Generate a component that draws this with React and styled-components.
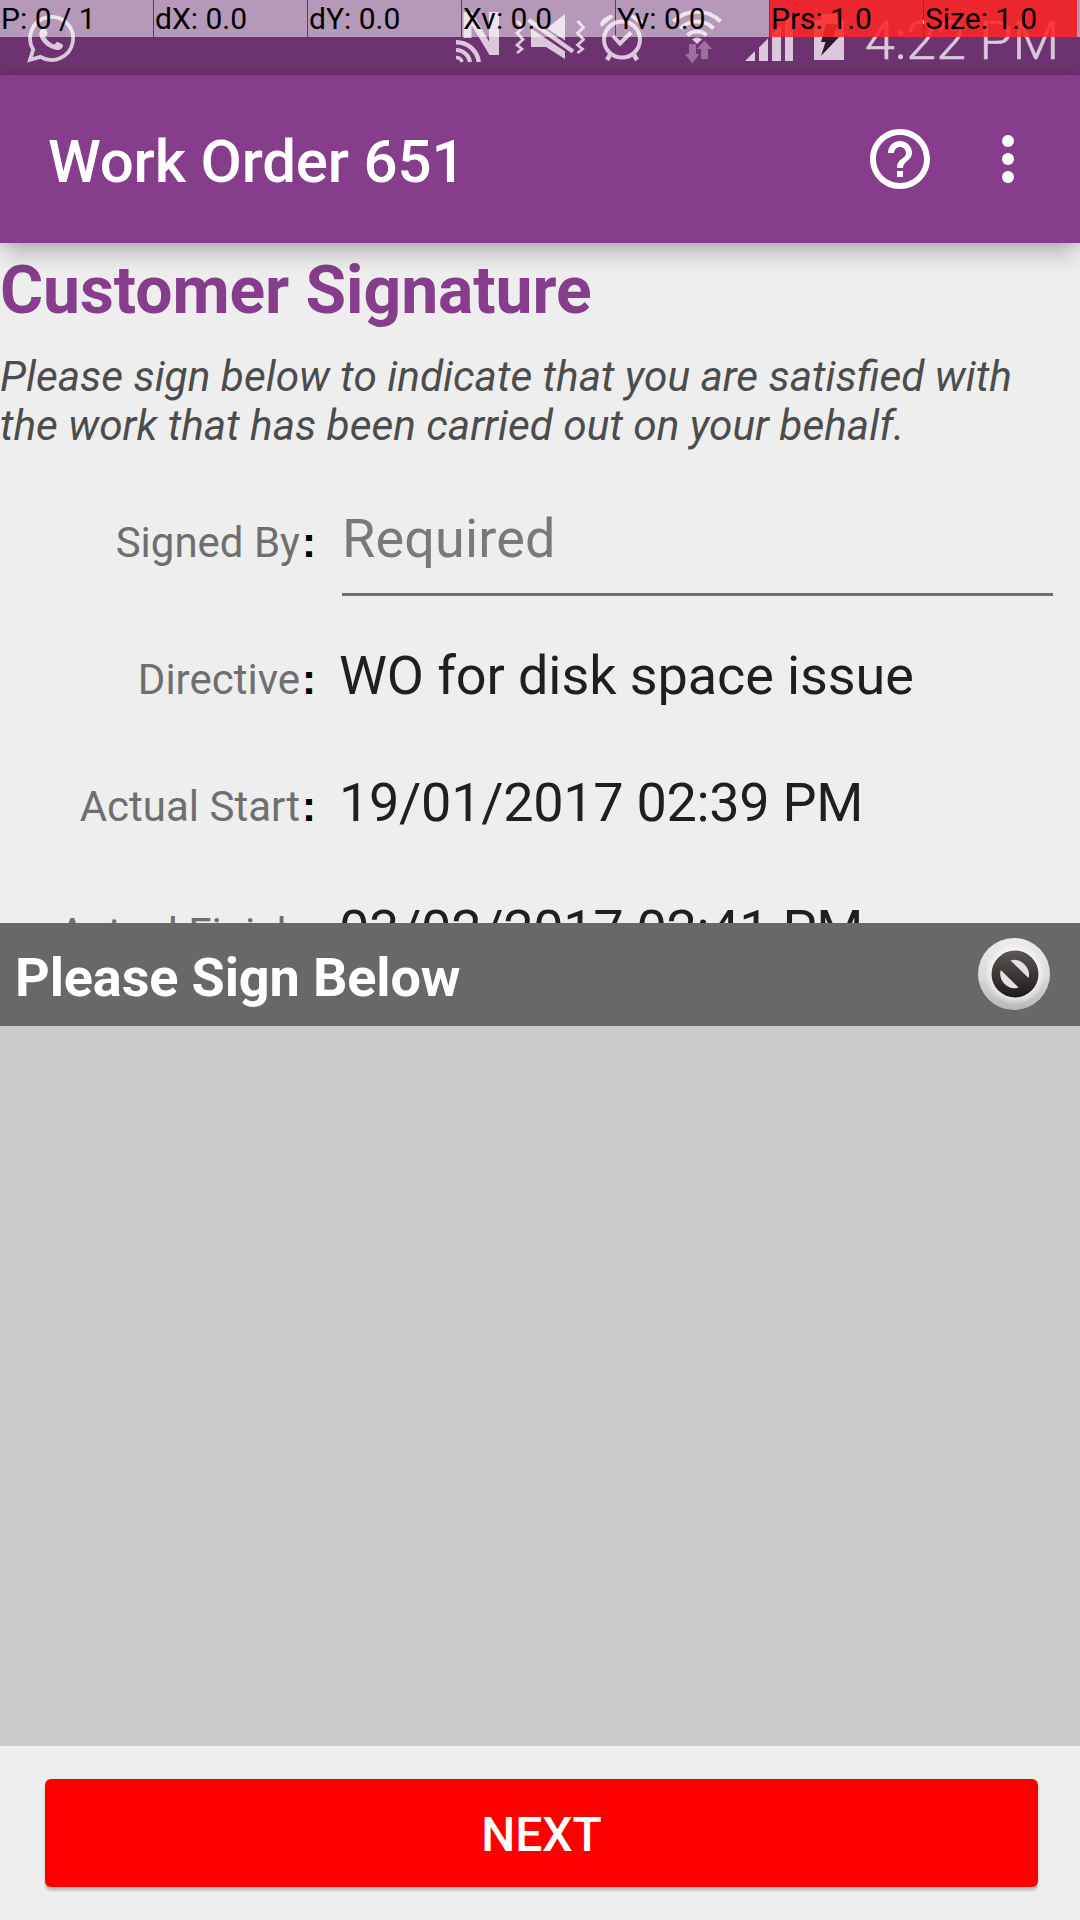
import React from "react";
import styled, { createGlobalStyle } from "styled-components";

const Global = createGlobalStyle`
  *, *::before, *::after { box-sizing: border-box; }
  html, body { margin: 0; padding: 0; background: #eeeeee; }
  body { font-family: Roboto, "Noto Sans", sans-serif; }
`;

const ICON = "#dbc8dc";
const PURPLE = "#863d8b";

const Screen = styled.div`
  position: relative;
  width: 1080px;
  height: 1920px;
  display: flex;
  flex-direction: column;
  overflow: hidden;
  background: #eeeeee;
`;

const StatusBar = styled.div`
  flex: none;
  height: 75px;
  display: flex;
  align-items: flex-start;
  padding-left: 27px;
  background: #6d3270;
`;

const StatusIcon = styled.svg`
  flex: none;
  display: block;
  width: ${(p) => p.$w}px;
  height: 75px;
  margin-right: ${(p) => p.$gap}px;
`;

const Clock = styled.div`
  font-size: 54px;
  font-weight: 300;
  line-height: 63px;
  padding-top: 9px;
  color: ${ICON};
  -webkit-text-stroke: 0.5px ${ICON};
  white-space: nowrap;
`;

const PointerBar = styled.div`
  position: absolute;
  top: 0;
  left: 0;
  width: 1080px;
  height: 37px;
  display: flex;
  gap: 1px;
`;

const PointerCell = styled.div`
  flex: none;
  width: 153px;
  height: 37px;
  padding: 0 0 0 1px;
  font-size: 30px;
  line-height: 37px;
  white-space: pre;
  color: #000;
  background: ${(p) =>
    p.$hot
      ? "linear-gradient(rgba(255,0,0,.75), rgba(255,0,0,.75)), rgba(255,255,255,.5)"
      : "rgba(255,255,255,.5)"};
`;

const PointerRest = styled.div`
  flex: 1;
  margin-left: -1px;
  background: rgba(255, 255, 255, 0.5);
`;

const AppBar = styled.header`
  flex: none;
  z-index: 1;
  height: 168px;
  display: flex;
  align-items: center;
  padding: 0 66px 0 48px;
  background: ${PURPLE};
  box-shadow: 0 14px 22px -4px rgba(0, 0, 0, 0.24), 0 0 10px rgba(0, 0, 0, 0.1);
`;

const Title = styled.h1`
  flex: 1;
  margin: 0;
  padding-top: 6px;
  font-size: 60px;
  font-weight: 500;
  line-height: 70px;
  letter-spacing: -0.17px;
  color: #fff;
`;

const HelpIcon = styled.svg`
  display: block;
  width: 60px;
  height: 60px;
  margin-right: 72px;
`;

const MoreIcon = styled.svg`
  display: block;
  width: 12px;
  height: 48px;
`;

const Content = styled.main`
  flex: none;
  height: 680px;
  overflow: hidden;
  padding-top: 9px;
`;

const Heading = styled.h2`
  margin: 0;
  font-size: 66px;
  font-weight: 700;
  line-height: 77px;
  letter-spacing: -0.07px;
  color: ${PURPLE};
`;

const Note = styled.p`
  margin: 23px 0 57px;
  font-size: 42.36px;
  font-style: italic;
  line-height: 49px;
  color: #4c4c4c;
`;

const Row = styled.div`
  display: grid;
  grid-template-columns: 300px 39px 1fr;
  align-items: baseline;
  height: ${(p) => p.$h}px;
`;

const Label = styled.div`
  font-size: 42px;
  line-height: 49px;
  text-align: right;
  color: #6f6f6f;
`;

const Colon = styled.div`
  padding-left: 2px;
  font-family: "Liberation Sans", sans-serif;
  font-size: 42px;
  font-weight: 700;
  line-height: 49px;
  color: #000;
`;

const Value = styled.div`
  font-size: 54px;
  line-height: 63px;
  letter-spacing: ${(p) => p.$track}px;
  color: #1f1f1f;
  white-space: nowrap;
`;

const Field = styled.div`
  height: 89px;
  margin: 0 27px 0 3px;
  border-bottom: 3px solid #6d6f6d;
  font-size: 54px;
  line-height: 63px;
  letter-spacing: 0.14px;
  color: #797979;
`;

const SignBar = styled.div`
  flex: none;
  height: 103px;
  display: flex;
  align-items: center;
  justify-content: space-between;
  padding: 0 30px 0 15px;
  background: #686868;
`;

const SignTitle = styled.div`
  padding-top: 5px;
  font-size: 54px;
  font-weight: 700;
  line-height: 63px;
  letter-spacing: -0.13px;
  color: #fff;
`;

const ClearIcon = styled.svg`
  display: block;
  width: 72px;
  height: 72px;
  margin-bottom: 1px;
`;

const SignArea = styled.div`
  flex: none;
  height: 720px;
  background: #cbcbcb;
`;

const Footer = styled.footer`
  flex: 1;
  padding: 33px 42px 0 45px;
`;

const NextButton = styled.button`
  display: block;
  width: 100%;
  height: 108px;
  padding: 4px 0 0;
  border: 0;
  border-radius: 6px;
  background: #ff0000;
  color: #fff;
  font-family: inherit;
  font-size: 48px;
  font-weight: 500;
  line-height: 56px;
  text-align: center;
  box-shadow: 0 4px 2px rgba(0, 0, 0, 0.16), 0 1px 3px rgba(0, 0, 0, 0.12);
`;

const pointers = [
  { text: "P: 0 / 1" },
  { text: "dX: 0.0" },
  { text: "dY: 0.0" },
  { text: "Xv: 0.0" },
  { text: "Yv: 0.0" },
  { text: "Prs: 1.0", hot: true },
  { text: "Size: 1.0", hot: true },
];

const rows = [
  { label: "Directive", value: "WO for disk space issue", track: -0.1 },
  { label: "Actual Start", value: "19/01/2017 02:39 PM", track: -0.3 },
  { label: "Actual Finish", value: "03/02/2017 02:41 PM", track: -0.3 },
];

function StatusIcons() {
  return (
    <>
      <StatusIcon $w={49} $gap={380} viewBox="27 0 49 75">
        <path
          d="M33.2 49.5A21.5 21.5 0 1 1 40.5 56.8L30 59.8Z"
          fill="none"
          stroke={ICON}
          strokeWidth="3.8"
        />
        <path
          d="M41 29.5c2-2.5 4.5-2 5.3 0l1.3 3.4c.4 1.4-2.6 3.5-2.2 4.2 2 3.4 5 6 8.4 7.5 1 .4 2.6-3.2 4-2.7l4 2c1.6.8 1.400 2.600.2 4-3 3.500-7.500 2-11.500.2-5-2.400-8.400-6.300-10.300-10.400-1.400-3.200-1.200-6 .8-8.200Z"
          fill={ICON}
        />
      </StatusIcon>
      <StatusIcon $w={44} $gap={15} viewBox="456 0 44 75">
        <path d="M463.5 38V12h8.5l17 29.5V12h10v43h-9.5L471.5 25v13Z" fill={ICON} />
        <g fill="none" stroke={ICON} strokeWidth="4">
          <path d="M456 42.2A22.5 22.5 0 0 1 478.8 62" strokeWidth="4.5" />
          <path d="M456 50A14 14 0 0 1 470 62" />
          <path d="M456 57.5A6 6 0 0 1 462 62" strokeWidth="3.5" />
        </g>
      </StatusIcon>
      <StatusIcon $w={70} $gap={15} viewBox="515 0 70 75">
        <path d="M531 29h15l19-15v45l-19-12h-15Z" fill={ICON} />
        <path d="M528 21l46 31" stroke="#6d3270" strokeWidth="9" />
        <path d="M528.5 20l44.5 31.5" stroke={ICON} strokeWidth="4.5" />
        <g fill="none" stroke={ICON} strokeWidth="2.8">
          <path d="M517 21l6 6.5-6 5.5 6 6.5-6 5.5 5 4-5 4" />
          <path d="M577.5 21l6 6.5-6 5.5 6 6.5-6 5.5 5 4-5 4" />
        </g>
      </StatusIcon>
      <StatusIcon $w={44} $gap={28} viewBox="600 0 44 75">
        <g fill="none" stroke={ICON}>
          <circle cx="622" cy="39.5" r="18" strokeWidth="4" />
          <path d="M613 36l7 7.5 11-11" strokeWidth="4" />
          <path d="M610.5 54l-3.5 6M633.5 54l3.5 6" strokeWidth="4.5" />
        </g>
        <path d="M601.5 27c-3-4 0-7 3-9s7-5 9-1ZM642.5 27c3-4 0-7-3-9s-7-5-9-1Z" fill={ICON} />
      </StatusIcon>
      <StatusIcon $w={50} $gap={23} viewBox="672 0 50 75">
        <g fill="none" stroke={ICON} strokeWidth="4">
          <path d="M673.5 21.5A33 33 0 0 1 720.5 21.5" />
          <path d="M680.5 28.5A23 23 0 0 1 713.5 28.5" />
          <path d="M687.5 35.5A13.5 13.5 0 0 1 706.5 35.5" />
        </g>
        <path d="M692 39.5q5-4 10 0l-5 4.5Z" fill={ICON} />
        <path d="M689 44h7v10h3.5l-7.2 9.5L685 54h4ZM701 59V49h-4.5l8-8.5 7.5 8.5h-4v10Z" fill="#9a719d" />
      </StatusIcon>
      <StatusIcon $w={48} $gap={21} viewBox="745 0 48 75">
        <path d="M745 61L755 51V61ZM759 47.5L768 38.5V61H759ZM772 34L781 25V61H772ZM785 22L793 14V61H785Z" fill={ICON} />
      </StatusIcon>
      <StatusIcon $w={30} $gap={21} viewBox="814 0 30 75">
        <path d="M821 14h16v6h7v40h-30V20h7Z" fill={ICON} />
        <path d="M826 24h12l-5 13h6l-18 19 4.5-14H821Z" fill="#2b1a2d" />
      </StatusIcon>
    </>
  );
}

export default function App() {
  return (
    <Screen>
      <Global />
      <StatusBar>
        <StatusIcons />
        <Clock>4:22 PM</Clock>
      </StatusBar>
      <AppBar>
        <Title>Work Order 651</Title>
        <HelpIcon viewBox="2 2 20 20" fill="#fff">
          <path d="M11 18h2v-2h-2v2zm1-16C6.48 2 2 6.48 2 12s4.48 10 10 10 10-4.48 10-10S17.52 2 12 2zm0 18c-4.41 0-8-3.59-8-8s3.59-8 8-8 8 3.59 8 8-3.59 8-8 8zm0-14c-2.21 0-4 1.79-4 4h2c0-1.1.9-2 2-2s2 .9 2 2c0 2-3 1.75-3 5h2c0-2.25 3-2.5 3-5 0-2.21-1.79-4-4-4z" />
        </HelpIcon>
        <MoreIcon viewBox="0 0 12 48" fill="#fff">
          <circle cx="6" cy="6" r="6" />
          <circle cx="6" cy="24" r="6" />
          <circle cx="6" cy="42" r="6" />
        </MoreIcon>
      </AppBar>
      <Content>
        <Heading>Customer Signature</Heading>
        <Note>
          Please sign below to indicate that you are satisfied with
          <br />
          the work that has been carried out on your behalf.
        </Note>
        <Row $h={137}>
          <Label>Signed By</Label>
          <Colon>:</Colon>
          <Field>Required</Field>
        </Row>
        {rows.map((r) => (
          <Row key={r.label} $h={127}>
            <Label>{r.label}</Label>
            <Colon>:</Colon>
            <Value $track={r.track}>{r.value}</Value>
          </Row>
        ))}
      </Content>
      <SignBar>
        <SignTitle>Please Sign Below</SignTitle>
        <ClearIcon viewBox="0 0 72 72">
          <defs>
            <linearGradient id="rim" x1="0" y1="0" x2="0" y2="1">
              <stop offset="0" stopColor="#ececec" />
              <stop offset="0.5" stopColor="#dcdcdc" />
              <stop offset="1" stopColor="#b8b8b8" />
            </linearGradient>
            <linearGradient id="ban" x1="0" y1="0" x2="0" y2="1">
              <stop offset="0" stopColor="#5c5755" />
              <stop offset="1" stopColor="#1e1a19" />
            </linearGradient>
            <radialGradient id="halo">
              <stop offset="0.72" stopColor="#fff" stopOpacity="0.75" />
              <stop offset="1" stopColor="#fff" stopOpacity="0" />
            </radialGradient>
          </defs>
          <circle cx="36" cy="36" r="36" fill="url(#rim)" />
          <circle cx="37" cy="36" r="31" fill="url(#halo)" />
          <circle cx="37" cy="36" r="23.5" fill="url(#ban)" />
          <path d="M32.5 22.5C40 18.5 54 29 50.5 40Z" fill="#e2e2e2" />
          <path d="M22.800 32C19.500 42 30 53.500 40.500 49.500Z" fill="#e2e2e2" />
        </ClearIcon>
      </SignBar>
      <SignArea />
      <Footer>
        <NextButton>NEXT</NextButton>
      </Footer>
      <PointerBar>
        {pointers.map((p) => (
          <PointerCell key={p.text} $hot={p.hot}>
            {p.text}
          </PointerCell>
        ))}
        <PointerRest />
      </PointerBar>
    </Screen>
  );
}
